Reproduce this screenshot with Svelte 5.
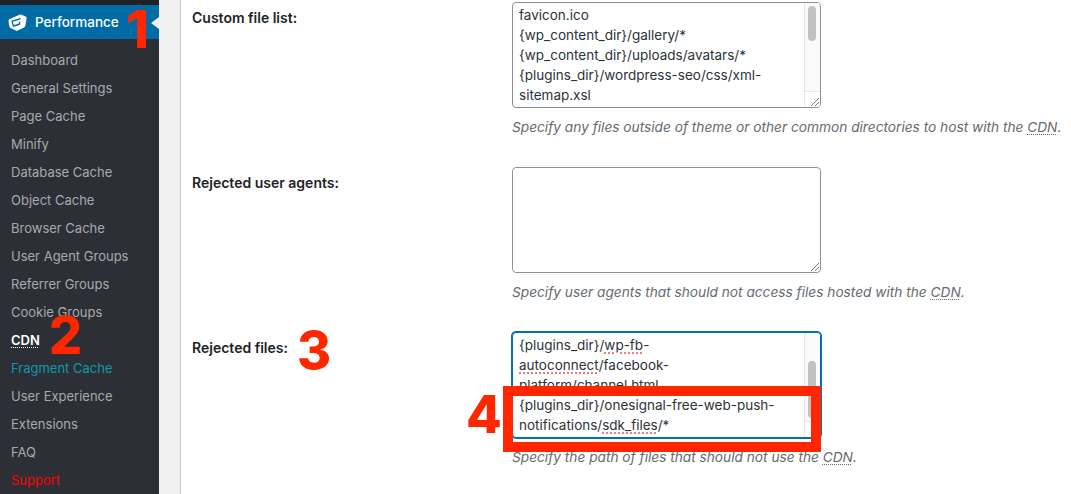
<script lang="ts">
  const menu = [
    { label: 'Dashboard' },
    { label: 'General Settings' },
    { label: 'Page Cache' },
    { label: 'Minify' },
    { label: 'Database Cache' },
    { label: 'Object Cache' },
    { label: 'Browser Cache' },
    { label: 'User Agent Groups' },
    { label: 'Referrer Groups' },
    { label: 'Cookie Groups' },
    { label: 'CDN', cls: 'current' },
    { label: 'Fragment Cache', cls: 'teal' },
    { label: 'User Experience' },
    { label: 'Extensions' },
    { label: 'FAQ' },
    { label: 'Support', cls: 'red' }
  ];
</script>

<div class="page">
  <aside class="sidebar">
    <div class="top-strip"></div>
    <div class="head">
      <svg class="logo" width="19" height="17" viewBox="0 0 19 17">
        <path d="M1.200 5.200 11.500.8c.8-.3 1.500-.3 2.200 0l3.900 1.800c.8.400 1.200 1.100 1 2l-1.300 7.200c-.1.800-.6 1.400-1.300 1.800l-6.200 2.900c-.7.300-1.400.3-2.100 0l-5.200-2.600c-.7-.4-1.200-1-1.300-1.800L.5 6.800c-.1-.7.200-1.300.7-1.600z" fill="#fff" />
        <path d="M3.300 6.700 13 3.800l-.9 1.700-7.300 2.200 1.100 3.300 4.700-1.300.4-1.600 1.600-.5-.9 3.400-6.700 2z" fill="#0069a4" />
      </svg>
      <span>Performance</span>
      <i class="arrow"></i>
    </div>
    <ul>
      {#each menu as item}
        <li class={item.cls ?? ''}>{item.label}</li>
      {/each}
    </ul>
  </aside>

  <main class="content">
    <section class="card">
      <div class="row">
        <div class="name">Custom file list:</div>
        <div class="field">
          <div class="area">
            <div class="text">favicon.ico<br />{'{'}wp_content_dir}/gallery/*<br />{'{'}wp_content_dir}/uploads/avatars/*<br />{'{'}plugins_dir}/wordpress-seo/css/xml-<br />sitemap.xsl</div>
            <div class="bar"><b class="thumb first"></b><span class="corner"></span></div>
            <svg class="grip" width="12" height="12" viewBox="0 0 12 12"><path d="M3 11l8-8M7 11l4-4" stroke="#777" stroke-width="1" /></svg>
          </div>
          <p class="desc">Specify any files outside of theme or other common directories to host with the <abbr>CDN</abbr>.</p>
        </div>
      </div>

      <div class="row">
        <div class="name">Rejected user agents:</div>
        <div class="field">
          <div class="area plain">
            <svg class="grip" width="12" height="12" viewBox="0 0 12 12"><path d="M3 11l8-8M7 11l4-4" stroke="#777" stroke-width="1" /></svg>
          </div>
          <p class="desc">Specify user agents that should not access files hosted with the <abbr>CDN</abbr>.</p>
        </div>
      </div>

      <div class="row">
        <div class="name">Rejected files:</div>
        <div class="field">
          <div class="area focus">
            <div class="text scrolled">{'{'}plugins_dir}/<u>wp-fb</u>-<br /><u>autoconnect</u>/facebook-<br />platform/channel.html<br />{'{'}plugins_dir}/onesignal-free-web-push-<br />notifications/<u>sdk_files</u>/*</div>
            <div class="bar"><b class="thumb third"></b><span class="corner"></span></div>
          </div>
          <p class="desc">Specify the path of files that should not use the <abbr>CDN</abbr>.</p>
          <div class="redbox"></div>
        </div>
      </div>
    </section>
  </main>

  <span class="num n1">1</span>
  <span class="num n2">2</span>
  <span class="num n3">3</span>
  <span class="num n4">4</span>
</div>

<style>
  :global(body) {
    margin: 0;
    background: #f0f0f1;
  }

  .page {
    position: relative;
    display: flex;
    width: 1071px;
    height: 494px;
    overflow: hidden;
    font-family: Inter, "Liberation Sans", sans-serif;
    color: #32373c;
  }

  .sidebar {
    width: 159px;
    flex: none;
    background: #2c3036;
    color: #a7aaad;
    font-size: 13px;
  }

  .top-strip {
    height: 5px;
    background: #1d2327;
  }

  .head {
    position: relative;
    display: flex;
    align-items: center;
    height: 34px;
    background: #006ba5;
    color: #fff;
    font-size: 13.5px;
    font-weight: 500;
  }

  .logo {
    margin: 0 8px 0 8px;
  }

  .arrow {
    position: absolute;
    right: 0;
    top: 12px;
    border-style: solid;
    border-color: transparent #f0f0f1 transparent transparent;
    border-width: 6px 8px 6px 0;
  }

  ul {
    list-style: none;
    margin: 0;
    padding: 7px 0 0 11px;
  }

  li {
    height: 28px;
    line-height: 28px;
    white-space: nowrap;
  }

  .current {
    color: #fff;
    font-weight: 600;
    text-decoration: underline dotted 1px;
    text-underline-offset: 2px;
  }

  .teal {
    color: #0e98a8;
  }

  .red {
    color: #f00;
  }

  .content {
    flex: 1;
    padding-left: 21px;
  }

  .card {
    height: 100%;
    background: #fff;
    border-left: 1px solid #c8c8c8;
    padding-left: 11px;
  }

  .row {
    display: flex;
    height: 165px;
    padding-top: 2px;
    box-sizing: border-box;
  }

  .name {
    width: 320px;
    flex: none;
    padding-top: 7px;
    font-size: 14px;
    font-weight: 600;
    color: #1d2327;
  }

  .field {
    position: relative;
    width: 560px;
  }

  .area {
    position: relative;
    box-sizing: border-box;
    width: 309px;
    height: 106px;
    border: 1px solid #8c8f94;
    border-radius: 4px;
    overflow: hidden;
    background: #fff;
  }

  .focus {
    border-color: #0073aa;
    box-shadow: 0 0 0 1px #0073aa;
  }

  .text {
    padding: 2px 6px;
    font-size: 13.5px;
    line-height: 20px;
    color: #2c3338;
    white-space: nowrap;
  }

  u {
    text-decoration: underline dotted #f07a7a 1.5px;
    text-underline-offset: 2px;
  }

  .bar {
    position: absolute;
    top: 0;
    right: 0;
    bottom: 0;
    width: 15px;
    background: #fafafa;
    border-left: 1px solid #e8e8e8;
  }

  .thumb {
    position: absolute;
    left: 3px;
    width: 8px;
    border-radius: 4px;
    background: #c1c1c1;
  }

  .first {
    top: 3px;
    height: 35px;
  }

  .third {
    top: 28px;
    height: 57px;
  }

  .corner {
    position: absolute;
    left: 0;
    right: 0;
    bottom: 0;
    height: 15px;
    background: #fff;
    border-top: 1px solid #e8e8e8;
  }

  .grip {
    position: absolute;
    right: 0;
    bottom: 0;
  }

  .desc {
    margin: 10px 0 0;
    font-size: 13.7px;
    line-height: 18px;
    font-style: italic;
    color: #646970;
    white-space: nowrap;
  }

  abbr {
    text-decoration: underline dotted 1px;
    text-underline-offset: 2px;
  }

  .redbox {
    position: absolute;
    left: -9px;
    top: 54px;
    width: 318px;
    height: 66px;
    box-sizing: border-box;
    border: 10px solid #ff2600;
  }

  .num {
    position: absolute;
    font-family: Inter, sans-serif;
    font-weight: 800;
    font-size: 52px;
    color: #ff2600;
    line-height: 60px;
  }

  .n1 {
    left: 126px;
    top: 0;
  }

  .n2 {
    left: 49px;
    top: 306px;
  }

  .n3 {
    left: 297px;
    top: 321px;
  }

  .n4 {
    left: 466px;
    top: 385px;
  }
</style>
